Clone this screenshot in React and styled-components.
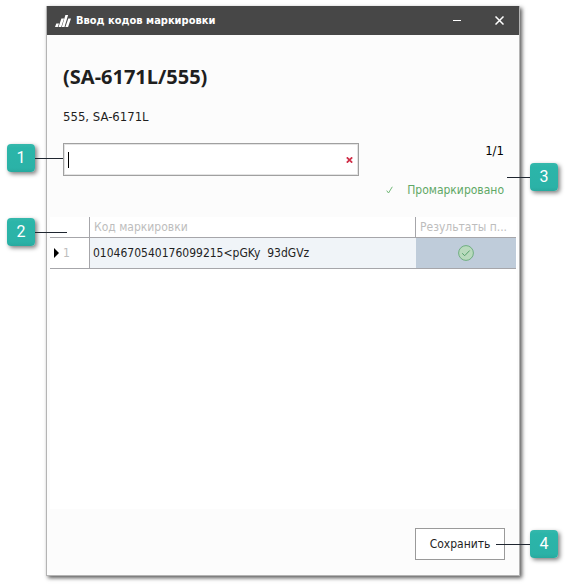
import React, { useState } from "react";
import styled, { createGlobalStyle } from "styled-components";

const GlobalStyle = createGlobalStyle`
  *, *::before, *::after { box-sizing: border-box; }
  body {
    margin: 0;
    background: #fff;
    color: #1f1f1f;
    font: 12px/16px "DejaVu Sans Condensed", "Noto Sans", sans-serif;
  }
  button, input { font: inherit; color: inherit; }
`;

const Page = styled.main`
  display: flex;
  min-height: 100vh;
  padding: 6px 49px 10px 46px;
`;

const Window = styled.section`
  flex: 1;
  min-width: 0;
  display: flex;
  flex-direction: column;
  background: #fcfcfc;
  border: 1px solid #b4b4b4;
  border-top: 0;
  box-shadow: 2px 2px 4px rgba(0, 0, 0, 0.65);
`;

const TitleBar = styled.header`
  display: flex;
  align-items: center;
  height: 29px;
  padding: 0 8px;
  background: #474747;
  color: #fff;
`;

const Title = styled.h1`
  flex: 1;
  margin: 0 0 0 5px;
  font-size: 11px;
  line-height: 16px;
  font-weight: bold;
`;

const WindowButton = styled.button`
  display: grid;
  place-items: center;
  width: 24px;
  height: 24px;
  margin-left: 18px;
  padding: 0;
  border: 0;
  background: none;
  color: #fff;
`;

const Summary = styled.div`
  padding: 30px 15px 19px 16px;
`;

const ProductName = styled.h2`
  margin: 0;
  font: bold 20px/24px "Noto Sans", sans-serif;
`;

const ProductCode = styled.p`
  margin: 20px 0 18px;
  font-size: 13px;
`;

const EntryRow = styled.div`
  display: grid;
  grid-template-columns: minmax(0, 296px) 1fr;
`;

const Field = styled.div`
  position: relative;
  display: flex;
  align-items: center;
  height: 33px;
  padding-right: 5px;
  background: #fff;
  border: 1px solid #a0a0a0;
  box-shadow: inset 0 0 0 1px #e4e4e4;
`;

const CodeInput = styled.input`
  flex: 1;
  min-width: 0;
  height: 24px;
  padding: 0 4px;
  border: 0;
  outline: 0;
  background: transparent;
`;

const Caret = styled.span`
  width: 1px;
  height: 16px;
  margin-left: 4px;
  background: #000;
`;

const ClearButton = styled.button`
  display: grid;
  place-items: center;
  width: 7px;
  height: 12px;
  padding: 0;
  border: 0;
  background: none;
`;

const Counter = styled.output`
  justify-self: end;
  color: #000;
  font-size: 13px;
`;

const Status = styled.p`
  position: relative;
  grid-column: 1 / -1;
  justify-self: end;
  display: flex;
  align-items: center;
  gap: 14px;
  margin: 6px 0 0;
  color: #5fa866;
`;

const GridArea = styled.div`
  position: relative;
  flex: 1;
  margin: 0 2px 0 3px;
  background: #fff;
`;

const CodeTable = styled.table`
  width: calc(100% - 1px);
  table-layout: fixed;
  border-collapse: separate;
  border-spacing: 0;
`;

const HeaderCell = styled.th`
  width: ${(p) => p.$width};
  height: 21px;
  padding: 0 4px;
  white-space: nowrap;
  text-align: left;
  font-weight: normal;
  color: #bdbdbd;
  border-bottom: 1px solid #a6a6aa;
  border-right: ${(p) => (p.$last ? "0" : "1px solid #a6a6aa")};
`;

const Cell = styled.td`
  height: 31px;
  padding: 0 3px;
  white-space: pre;
  text-align: ${(p) => p.$align || "left"};
  background: ${(p) => p.$fill || "#fff"};
  border-bottom: 1px solid #a6a6aa;
`;

const RowHead = styled(HeaderCell)`
  height: 31px;
`;

const RowMark = styled.span`
  display: flex;
  align-items: center;
  gap: 4px;
`;

const CheckIcon = styled.svg`
  display: block;
  margin: 0 auto;
`;

const Footer = styled.footer`
  display: flex;
  justify-content: flex-end;
  padding: 19px 14px 15px;
`;

const SaveButton = styled.button`
  position: relative;
  width: 90px;
  height: 32px;
  padding: 0;
  background: #fff;
  border: 1px solid #9a9a9a;
`;

const Callout = styled.span`
  position: absolute;
  top: ${(p) => p.$top};
  left: ${(p) => p.$left};
  display: flex;
  flex-direction: ${(p) => (p.$flip ? "row-reverse" : "row")};
  align-items: center;
  pointer-events: none;
`;

const Badge = styled.b`
  width: 28px;
  height: 28px;
  border-radius: 4px;
  background: linear-gradient(#36b8ac, #2bb5a9 4px, #2bb2a7 24px, #28a99e);
  box-shadow: 2px 2px 4px rgba(0, 0, 0, 0.5);
  color: #fff;
  font: 16px/27px Roboto, sans-serif;
  text-align: center;
`;

const Leader = styled.i`
  width: ${(p) => p.$length};
  height: 1px;
  background: #1f2630;
`;

function Marker({ number, length, top, left, flip }) {
  return (
    <Callout $top={top} $left={left} $flip={flip}>
      <Badge>{number}</Badge>
      <Leader $length={length} />
    </Callout>
  );
}

function Logo() {
  return (
    <svg width="16" height="14" viewBox="0 0 16 14" fill="#fff" aria-hidden="true">
      <path d="M1.3 9.5H4L2.8 13H0z" />
      <path d="M6.4 4.5h2.7L6.2 13H3.5z" />
      <path d="M10.4 1h2.7L9.5 13H6.8z" />
      <path d="M13.3 4.5H16L13.1 13h-2.7z" />
    </svg>
  );
}

export default function App() {
  const [code, setCode] = useState("");
  return (
    <>
      <GlobalStyle />
      <Page>
        <Window aria-label="Ввод кодов маркировки">
          <TitleBar>
            <Logo />
            <Title>Ввод кодов маркировки</Title>
            <WindowButton aria-label="Свернуть">
              <svg width="8" height="9" viewBox="0 0 8 9">
                <path d="M0 4.5h8" stroke="currentColor" />
              </svg>
            </WindowButton>
            <WindowButton aria-label="Закрыть">
              <svg width="9" height="9" viewBox="0 0 9 9">
                <path d="m.5.5 8 8m0-8-8 8" stroke="currentColor" strokeWidth="1.5" />
              </svg>
            </WindowButton>
          </TitleBar>

          <Summary>
            <ProductName>(SA-6171L/555)</ProductName>
            <ProductCode>555, SA-6171L</ProductCode>
            <EntryRow>
              <Field>
                {code === "" && <Caret />}
                <CodeInput
                  aria-label="Код маркировки"
                  value={code}
                  onChange={(e) => setCode(e.target.value)}
                />
                <ClearButton aria-label="Очистить" onClick={() => setCode("")}>
                  <svg width="7" height="6" viewBox="0 0 7 6">
                    <path d="m.8.3 5.4 5.4m0-5.4L.8 5.7" stroke="#d02f48" strokeWidth="1.7" />
                  </svg>
                </ClearButton>
                <Marker number={1} length="28px" top="0" left="-57px" />
              </Field>
              <Counter>1/1</Counter>
              <Status>
                <svg width="7" height="8" viewBox="0 0 7 8" fill="none" aria-hidden="true">
                  <path d="M.7 4.6 2.5 7 6.3.8" stroke="#72b878" />
                </svg>
                Промаркировано
                <Marker number={3} length="23px" top="-19px" left="calc(100% + 3px)" flip />
              </Status>
            </EntryRow>
          </Summary>

          <GridArea>
            <CodeTable>
              <thead>
                <tr>
                  <HeaderCell $width="40px" aria-label="Номер" />
                  <HeaderCell>Код маркировки</HeaderCell>
                  <HeaderCell $width="100px" $last>
                    Результаты п...
                  </HeaderCell>
                </tr>
              </thead>
              <tbody>
                <tr>
                  <RowHead scope="row">
                    <RowMark>
                      <svg width="5" height="10" viewBox="0 0 5 10" aria-hidden="true">
                        <path d="M0 0v10l5-5z" fill="#000" />
                      </svg>
                      1
                    </RowMark>
                  </RowHead>
                  <Cell $fill="#f0f4f8">{"0104670540176099215<pGKy  93dGVz"}</Cell>
                  <Cell $fill="#bfccda" $align="center">
                    <CheckIcon
                      width="16"
                      height="16"
                      viewBox="0 0 16 16"
                      fill="none"
                      role="img"
                      aria-label="Проверено"
                    >
                      <circle cx="8" cy="8" r="7.4" fill="#b9dabd" stroke="#6fae80" />
                      <path d="m4.2 8.3 2.5 2.4 5-5.2" stroke="#55a06a" />
                    </CheckIcon>
                  </Cell>
                </tr>
              </tbody>
            </CodeTable>
            <Marker number={2} length="32px" top="1px" left="-43px" />
          </GridArea>

          <Footer>
            <SaveButton>
              Сохранить
              <Marker number={4} length="34px" top="1px" left="80px" flip />
            </SaveButton>
          </Footer>
        </Window>
      </Page>
    </>
  );
}
